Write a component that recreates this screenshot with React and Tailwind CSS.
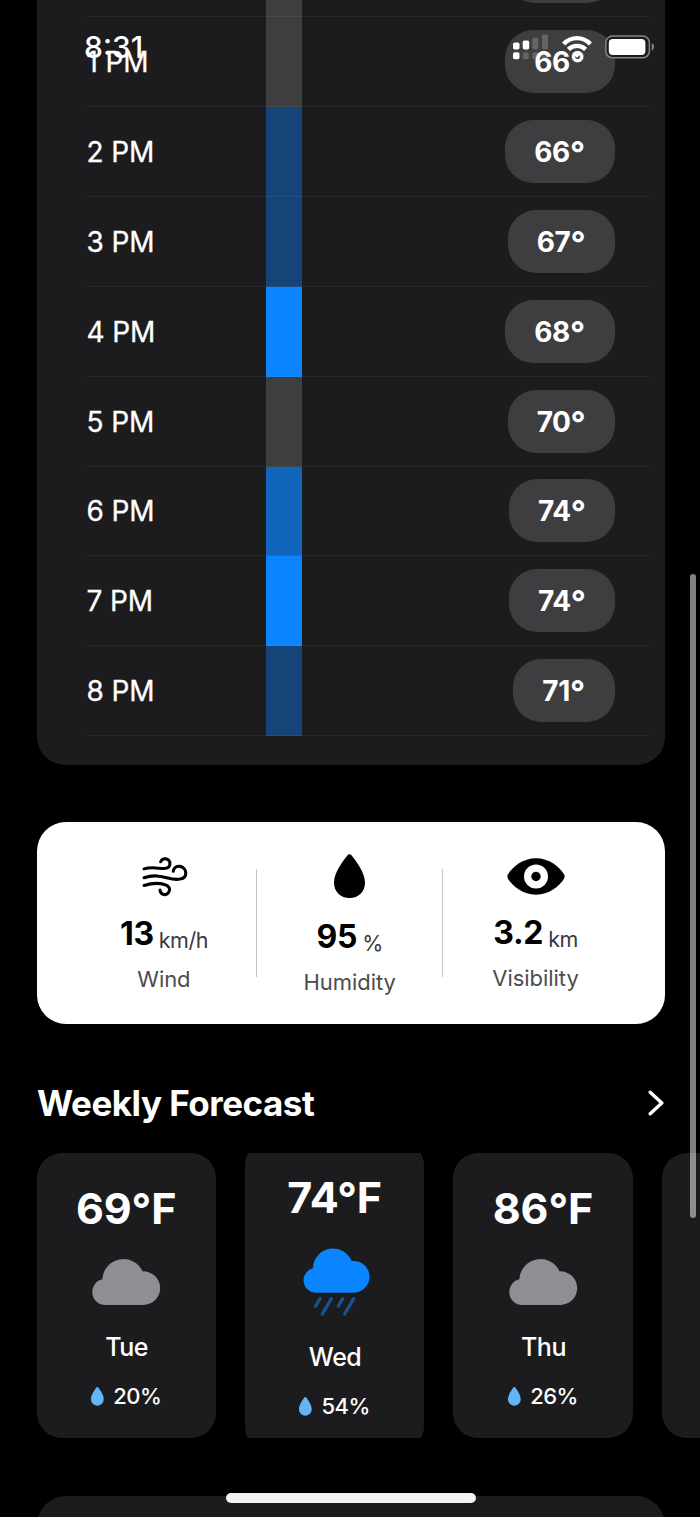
const HOURS = [
  { time: '', temp: '', bar: 'bg-[#3e3e40]' },
  { time: '1 PM', temp: '66', bar: 'bg-[#3e3e40]', pill: 'w-[110px]' },
  { time: '2 PM', temp: '66', bar: 'bg-[#154578]', pill: 'w-[110px]' },
  { time: '3 PM', temp: '67', bar: 'bg-[#154578]', pill: 'w-[107px]' },
  { time: '4 PM', temp: '68', bar: 'bg-[#0a84ff]', pill: 'w-[110px]' },
  { time: '5 PM', temp: '70', bar: 'bg-[#3e3e40]', pill: 'w-[107px]' },
  { time: '6 PM', temp: '74', bar: 'bg-[#1165bc]', pill: 'w-[105.5px]' },
  { time: '7 PM', temp: '74', bar: 'bg-[#0a84ff]', pill: 'w-[105.5px]' },
  { time: '8 PM', temp: '71', bar: 'bg-[#154578]', pill: 'w-[102px]' },
];

const STATS = [
  { label: 'Wind', value: '13', unit: 'km/h', icon: <WindIcon />, box: 'h-[45px]' },
  { label: 'Humidity', value: '95', unit: '%', icon: <DropIcon className="w-[31px] h-[44px] mb-[4px] text-black" />, box: 'h-[48px]' },
  { label: 'Visibility', value: '3.2', unit: 'km', icon: <EyeIcon />, box: 'h-[44px]' },
];

const DAYS = [
  { day: 'Tue', temp: '69°F', rain: '20%' },
  { day: 'Wed', temp: '74°F', rain: '54%', rainy: true },
  { day: 'Thu', temp: '86°F', rain: '26%' },
];

function WindIcon() {
  return (
    <svg viewBox="336 124 140 122" className="w-[47.5px] h-[41.4px] ml-[2px]" fill="none" stroke="#000" strokeWidth="9" strokeLinecap="round">
      <path d="M345 162C370 155 385 161 403 161C418 161 423 152 421 143C418 129 399 128 394 141" />
      <path d="M345 188C375 178 395 184 415 189C440 196 469 195 468 174C467 150 434 148 431 169" />
      <path d="M345 211C370 203 392 204 405 208C420 212 423 222 418 230C411 242 393 240 392 224" />
    </svg>
  );
}

function DropIcon({ className }) {
  return (
    <svg viewBox="0 0 31 44" preserveAspectRatio="none" className={`overflow-visible ${className}`} fill="currentColor">
      <path d="M13.3 1.4C14.5 -0.1 16.5 -0.1 17.7 1.4C21 5.6 31 18 31 28.5C31 38 24.5 44 15.5 44C6.5 44 0 38 0 28.5C0 18 10 5.6 13.3 1.4Z" />
    </svg>
  );
}

function EyeIcon() {
  return (
    <svg viewBox="0 0 58 37" className="w-[58px] h-[37px]">
      <path d="M1 16.2C6 8.5 16 0.3 29 0.3C42 0.3 52 8.5 57 16.2Q58.2 18.5 57 20.8C52 28.5 42 36.7 29 36.7C16 36.7 6 28.5 1 20.8Q-0.2 18.5 1 16.2Z" />
      <circle cx="29" cy="18.5" r="12" fill="#fff" />
      <circle cx="29" cy="18.5" r="4.7" />
    </svg>
  );
}

function CloudIcon() {
  return (
    <svg viewBox="186 89 208 138" className="w-[69px] h-[46px] ml-[1px] overflow-visible" fill="#8e8e93">
      <path d="M226 227A39 39 0 0 1 217 150A64 64 0 0 1 339 126A50.5 50.5 0 0 1 343 227Z" />
    </svg>
  );
}

function RainIcon() {
  return (
    <svg viewBox="819 57 198 200" className="w-[66px] h-[66.7px] ml-[3px] overflow-visible">
      <path fill="#0a84ff" d="M857 188A37 37 0 0 1 849 115A60.2 60.2 0 0 1 965 93A47.7 47.7 0 1 1 969 188Z" />
      <path stroke="#155393" strokeWidth="10" strokeLinecap="round" d="M870 206L857 228M904 206L877 252M938 206L925 228M971 206L944 252" />
    </svg>
  );
}

function StatusBar() {
  return (
    <div className="absolute inset-x-0 top-0 h-[93px] pl-[84px] pr-[46.5px] flex items-center justify-between z-10">
      <span className="text-[30px] leading-none font-medium">8:31</span>
      <div className="flex items-center">
        <svg viewBox="0 0 36 26" className="w-[36px] h-[26px] mr-[12.5px]" fill="#fff">
          <rect x="0" y="8.5" width="6.5" height="7" rx="1.8" />
          <rect x="9.7" y="6.5" width="6.5" height="9" rx="1.8" />
          <rect x="19.3" y="3.5" width="6" height="12" rx="1.8" opacity="0.2" />
          <rect x="29" y="0.5" width="6" height="15" rx="1.8" opacity="0.2" />
          <rect x="0" y="18.3" width="6.5" height="7" rx="1.8" />
          <rect x="9.7" y="18.3" width="6" height="7" rx="1.8" opacity="0.2" />
          <rect x="19.3" y="18.3" width="6" height="7" rx="1.8" opacity="0.2" />
          <rect x="29" y="18.3" width="6" height="7" rx="1.8" opacity="0.2" />
        </svg>
        <svg viewBox="0 0 30 24" className="w-[30px] h-[24px] mr-[13px]" fill="none" stroke="#fff" strokeWidth="4.4">
          <path d="M1.6 9C9 1.2 21 1.2 28.4 9" />
          <path d="M6.4 14.4C11.2 9.7 18.8 9.7 23.6 14.4" />
          <path d="M15 22.8L10.6 18.4C13.2 16 16.8 16 19.4 18.4Z" fill="#fff" stroke="none" />
        </svg>
        <svg viewBox="0 0 49 24" className="w-[49px] h-[24px]">
          <rect x="0.8" y="1" width="43.6" height="21.8" rx="6.6" fill="#1c1c1e" stroke="#858587" strokeWidth="1.5" />
          <rect x="3.8" y="4" width="36.6" height="16" rx="4" fill="#fff" />
          <path d="M46.8 8.2Q49.4 9.4 49 12Q49.2 14.6 46.8 15.8Z" fill="#858587" />
        </svg>
      </div>
    </div>
  );
}

function HourRow({ time, temp, bar, pill }) {
  return (
    <div className="relative h-[89.83px] shrink-0 flex items-center justify-between pl-[0.5px] pr-[36.5px] after:absolute after:inset-x-0 after:bottom-0 after:h-px after:bg-white/5">
      <span className="w-[179.5px] text-[28px] tracking-[-0.1px] [-webkit-text-stroke:0.3px_white]">{time}</span>
      <div className={`w-[36px] self-stretch ${bar}`} />
      <div className="w-[312.5px] flex justify-end">
        <div className={`h-[63px] mb-px rounded-[28px] bg-[#3e3e40] flex items-center justify-center text-[28px] font-bold tracking-[-0.4px] ${pill || 'w-[108px]'}`}>
          {temp && <span className="leading-[34px]">{temp}<span className="relative top-[3px] text-[33px] leading-none">°</span></span>}
        </div>
      </div>
    </div>
  );
}

function Stat({ label, value, unit, icon, box }) {
  return (
    <div className="flex-1 flex flex-col items-center pt-[32px]">
      <div className={`flex items-center justify-center ${box}`}>{icon}</div>
      <div className="mt-[14.5px] h-[40px] flex items-center gap-[5px]">
        <span className="text-[32px] leading-[40px] font-bold tracking-[-0.3px]">{value}</span>
        <span className="text-[21.5px] leading-[40px] pt-[12px] tracking-[-0.5px] text-[#3a3a3c]">{unit}</span>
      </div>
      <span className="mt-[10.5px] text-[22px] leading-[30px] tracking-[-0.05px] text-[#4c4c4e]">{label}</span>
    </div>
  );
}

function DayCard({ day, temp, rain, rainy }) {
  return (
    <div className={`w-[179.4px] shrink-0 bg-[#1c1c1e] flex flex-col items-center pt-[28.5px] ${rainy ? 'h-[306px] rounded-[22px]' : 'h-[285px] rounded-[25px]'}`}>
      <span className="text-[43px] leading-[52px] font-bold tracking-[-0.1px]">{temp}</span>
      <div className="mt-[25.5px]">{rainy ? <RainIcon /> : <CloudIcon />}</div>
      <span className="mt-[25px] ml-px text-[25px] leading-[34px] font-medium tracking-[-0.5px]">{day}</span>
      <div className="mt-[18px] flex items-center gap-[9.5px] text-[22px] leading-[28px] font-medium tracking-[-0.5px]">
        <DropIcon className="w-[12.7px] h-[18.7px] text-[#64b5f6]" />
        <span>{rain}</span>
      </div>
    </div>
  );
}

export default function App() {
  return (
    <div className="relative w-[700px] h-[1517px] overflow-hidden bg-black text-white font-['Inter',sans-serif] flex flex-col">
      <StatusBar />

      <section className="ml-[36.5px] w-[628px] h-[764.5px] shrink-0 overflow-hidden rounded-b-[28px] bg-[#1c1c1e] flex flex-col justify-end pl-[49.5px] pr-[13.5px] pb-[28.5px]">
        {HOURS.map((h, i) => <HourRow key={i} {...h} />)}
      </section>

      <section className="mt-[57.5px] ml-[36.5px] w-[628px] h-[201.5px] shrink-0 rounded-[29px] bg-white text-black flex pl-[35px] pr-[36.5px]">
        <Stat {...STATS[0]} />
        <div className="w-px h-[108px] self-center bg-[#c6c6c8]" />
        <Stat {...STATS[1]} />
        <div className="w-px h-[108px] self-center bg-[#c6c6c8]" />
        <Stat {...STATS[2]} />
      </section>

      <header className="mt-[57.5px] h-[44px] shrink-0 pl-[37px] pr-[36px] flex items-center justify-between">
        <h2 className="text-[35px] leading-none font-bold tracking-[-0.5px]">Weekly Forecast</h2>
        <svg viewBox="0 0 16 26" className="w-[16px] h-[26px]" fill="none" stroke="#fff" strokeWidth="3.4" strokeLinecap="round" strokeLinejoin="round">
          <path d="M2.2 2.2L13.8 13L2.2 23.8" />
        </svg>
      </header>

      <section className="mt-[28px] h-[285px] shrink-0 overflow-hidden pl-[36.5px] flex items-center gap-[29px]">
        {DAYS.map(d => <DayCard key={d.day} {...d} />)}
        <div className="w-[179.4px] h-[285px] shrink-0 rounded-[25px] bg-[#1c1c1e]" />
      </section>

      <section className="mt-[57.5px] ml-[36.5px] w-[628px] h-[80px] shrink-0 rounded-t-[29px] bg-[#1c1c1e]" />

      <div className="absolute right-[4px] top-[574px] w-[6px] h-[644px] rounded-full bg-white/50" />
      <div className="absolute left-[226px] top-[1493px] w-[250px] h-[9.5px] rounded-full bg-[#f2f2f2]" />
    </div>
  );
}
